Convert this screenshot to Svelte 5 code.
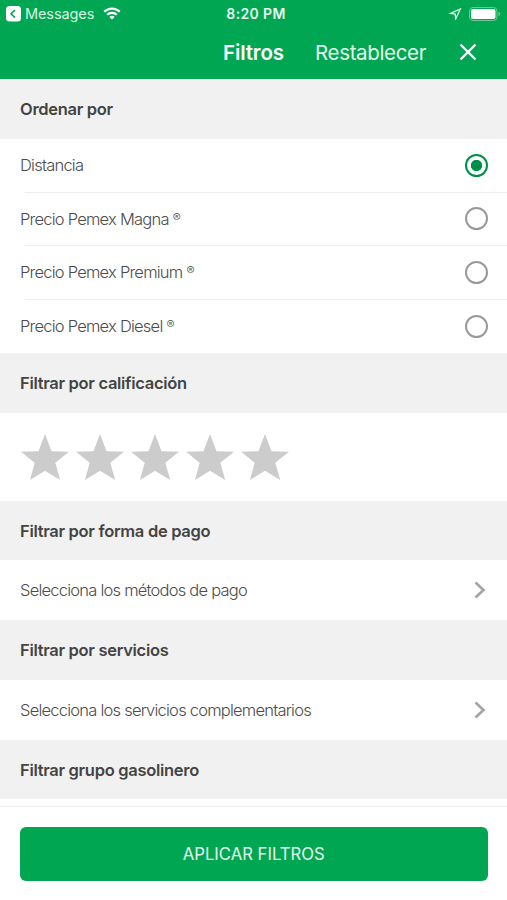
<script>
  const sortOptions = [
    { id: 'distancia', label: 'Distancia' },
    { id: 'magna', label: 'Precio Pemex Magna', registered: true },
    { id: 'premium', label: 'Precio Pemex Premium', registered: true },
    { id: 'diesel', label: 'Precio Pemex Diesel', registered: true }
  ]

  let sortBy = $state('distancia')
  let rating = $state(0)

  function reset() {
    sortBy = 'distancia'
    rating = 0
  }
</script>

<div class="screen">
  <header>
    <div class="status">
      <div class="carrier">
        <svg width="15" height="16" viewBox="0 0 15 16">
          <rect width="15" height="15.5" rx="3.5" fill="#fff" />
          <path d="M9 4 5 7.8l4 3.8" fill="none" stroke="#00a651" stroke-width="1.6" />
        </svg>
        <span class="app">Messages</span>
        <svg class="wifi" width="18" height="13" viewBox="0 0 18 13" fill="none" stroke="#fff">
          <path d="M1.2 4.8C5.5.5 12.5.5 16.8 4.8" stroke-width="2.2" />
          <path d="M4.2 7.8c2.7-2.6 6.900-2.6 9.600 0" stroke-width="2.2" />
          <path d="M9 12.600 6.300 9.900c1.500-1.400 3.900-1.400 5.400 0z" fill="#fff" stroke="none" />
        </svg>
      </div>
      <span class="time">8:20 PM</span>
      <div class="power">
        <svg width="13" height="12" viewBox="0 0 13 12" fill="none" stroke="#e0f6e9" stroke-width="1.3">
          <path d="M11.300 1 1.600 5.300l4.600.800.500 4.800z" />
        </svg>
        <svg width="32" height="14" viewBox="0 0 32 14">
          <rect x=".5" y=".5" width="27.500" height="13" rx="3.500" fill="none" stroke="#69cb96" />
          <rect x="2" y="2" width="24.500" height="10" rx="2" fill="#fff" />
          <path d="M29.500 4.800v4.400q1.800-.600 1.800-2.200t-1.800-2.200z" fill="#69cb96" />
        </svg>
      </div>
    </div>
    <nav>
      <h1>Filtros</h1>
      <button class="reset" onclick={reset}>Restablecer</button>
      <button class="close" aria-label="Cerrar">
        <svg width="18" height="18" viewBox="0 0 18 18">
          <path d="m1.500 1.500 15 15m0-15-15 15" stroke="#fff" stroke-width="2.400" />
        </svg>
      </button>
    </nav>
  </header>

  <main>
    <h2>Ordenar por</h2>
    <div class="options">
      {#each sortOptions as option}
        <button class="option" onclick={() => (sortBy = option.id)}>
          <span class="label">{option.label}{#if option.registered}<span class="reg">®</span>{/if}</span>
          <span class="radio" class:selected={sortBy === option.id}></span>
        </button>
      {/each}
    </div>

    <h2>Filtrar por calificación</h2>
    <div class="stars">
      {#each [1, 2, 3, 4, 5] as value}
        <button class="star" class:on={value <= rating} aria-label="{value} estrellas" onclick={() => (rating = value)}>
          <svg width="48" height="47" viewBox="0 0 48 47">
            <path d="m24 0 6.500 17.200L48 17.700 34.300 28.800 39.200 46 24 36.800 9 46l4.700-17.200L0 17.700l17.500-.500z" />
          </svg>
        </button>
      {/each}
    </div>

    <h2 class="payment">Filtrar por forma de pago</h2>
    <button class="picker">
      <span class="label">Selecciona los métodos de pago</span>
      <svg width="12" height="18" viewBox="0 0 12 18"><path d="m1.500 1.500 8 7.500-8 7.500" /></svg>
    </button>

    <h2>Filtrar por servicios</h2>
    <button class="picker">
      <span class="label">Selecciona los servicios complementarios</span>
      <svg width="12" height="18" viewBox="0 0 12 18"><path d="m1.500 1.500 8 7.500-8 7.500" /></svg>
    </button>

    <h2>Filtrar grupo gasolinero</h2>
  </main>

  <footer>
    <button class="apply">APLICAR FILTROS</button>
  </footer>
</div>

<style>
  :global(body) {
    margin: 0;
    background: #fff;
  }

  .screen {
    width: 507px;
    height: 900px;
    display: flex;
    flex-direction: column;
    overflow: hidden;
    font-family: Inter, 'Liberation Sans', sans-serif;
    color: #444;
    background: #fff;
  }

  button {
    margin: 0;
    padding: 0;
    border: none;
    background: none;
    font: inherit;
    color: inherit;
    text-align: left;
  }

  svg {
    display: block;
    flex: none;
  }

  header {
    height: 79px;
    background: #00a651;
    color: #fff;
  }

  .status {
    display: grid;
    grid-template-columns: 1fr auto 1fr;
    align-items: center;
    height: 27px;
    padding: 0 6px 0 6px;
    font-size: 14px;
  }

  .carrier,
  .power {
    display: flex;
    align-items: center;
  }

  .app {
    margin-left: 4px;
    font-size: 14.5px;
    letter-spacing: -0.1px;
    color: #d8f5e4;
  }

  .wifi {
    margin-left: 9px;
  }

  .time {
    margin-left: 5px;
    font-weight: 600;
    letter-spacing: 0.35px;
    color: #e8faef;
  }

  .power {
    justify-content: flex-end;
    gap: 7px;
  }

  nav {
    display: flex;
    align-items: center;
    justify-content: flex-end;
    height: 50px;
    padding-right: 30px;
  }

  h1 {
    margin: 0;
    font-size: 20.5px;
    font-weight: 600;
    letter-spacing: -0.1px;
  }

  .reset {
    margin-left: 31px;
    font-size: 20.5px;
    letter-spacing: -0.35px;
    color: #e0f8ea;
  }

  .close {
    margin-left: 33px;
  }

  main {
    flex: none;
    height: 727px;
  }

  h2 {
    display: flex;
    align-items: center;
    box-sizing: border-box;
    height: 60px;
    margin: 0;
    padding-left: 20px;
    font-size: 16.5px;
    font-weight: 600;
    letter-spacing: -0.3px;
    background: #f1f1f1;
  }

  h2.payment {
    height: 59px;
  }

  h2:last-child {
    height: 59px;
  }

  .options {
    height: 214px;
    display: grid;
    grid-template-rows: repeat(4, 1fr);
  }

  .option {
    display: flex;
    align-items: center;
    justify-content: space-between;
    padding: 0 19px 1px 20px;
    background: linear-gradient(#f0f0f0, #f0f0f0) 25px 100% / 100% 1px no-repeat;
  }

  .option:last-child {
    padding-bottom: 0;
    background: none;
  }

  .label {
    font-size: 16.5px;
    font-weight: 300;
    letter-spacing: -0.77px;
    color: #4c4c4c;
  }

  .reg {
    margin-left: 4px;
    font-size: 12px;
    position: relative;
    top: -3px;
  }

  .radio {
    box-sizing: border-box;
    width: 23px;
    height: 23px;
    border: 2px solid #999;
    border-radius: 50%;
  }

  .radio.selected {
    border-color: #008f49;
    background: radial-gradient(circle, #008f49 5.3px, transparent 6px);
  }

  .stars {
    display: flex;
    gap: 7px;
    height: 88px;
    box-sizing: border-box;
    padding: 21px 0 0 21px;
  }

  .star {
    height: 47px;
    fill: #ccc;
  }

  .star.on {
    fill: #00a651;
  }

  .picker {
    display: flex;
    align-items: center;
    justify-content: space-between;
    width: 100%;
    height: 60px;
    padding: 0 21px 0 20px;
  }

  .picker path {
    fill: none;
    stroke: #a3a3a3;
    stroke-width: 2.6;
  }

  footer {
    flex: 1;
    border-top: 1px solid #f3f3f3;
    padding: 20px 19.5px 0 20px;
  }

  .apply {
    width: 100%;
    height: 53.5px;
    border-radius: 6px;
    background: #00a651;
    color: #e4f9ed;
    font-size: 16.7px;
    text-align: center;
  }
</style>
